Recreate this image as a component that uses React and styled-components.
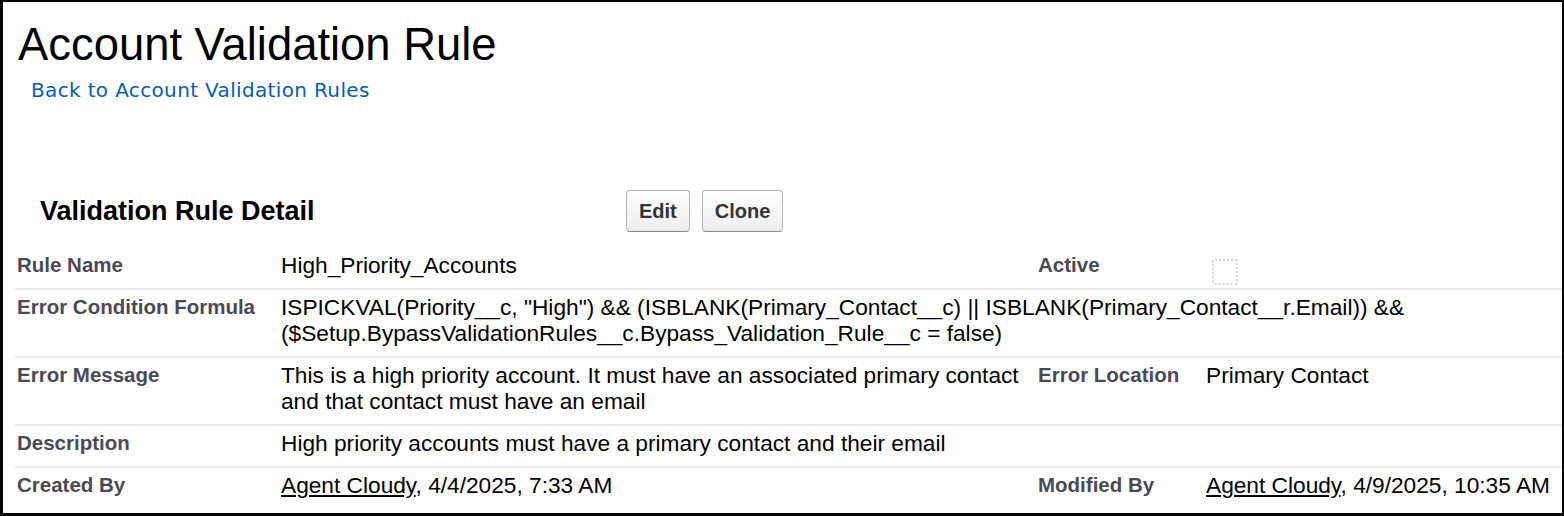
import React from 'react';
import styled, { createGlobalStyle } from 'styled-components';

const GlobalStyle = createGlobalStyle`
  html, body {
    margin: 0;
    padding: 0;
    background: #fff;
  }
  body {
    font-family: 'Liberation Sans', Arial, Helvetica, sans-serif;
    color: #000;
  }
`;

const rows = [
  {
    label: 'Rule Name',
    value: 'High_Priority_Accounts',
    label2: 'Active',
    value2: 'checkbox',
  },
  {
    label: 'Error Condition Formula',
    value:
      'ISPICKVAL(Priority__c, "High") && (ISBLANK(Primary_Contact__c) || ISBLANK(Primary_Contact__r.Email)) && ($Setup.BypassValidationRules__c.Bypass_Validation_Rule__c = false)',
    wide: true,
  },
  {
    label: 'Error Message',
    value: 'This is a high priority account. It must have an associated primary contact and that contact must have an email',
    label2: 'Error Location',
    value2: 'Primary Contact',
  },
  {
    label: 'Description',
    value: 'High priority accounts must have a primary contact and their email',
    label2: '',
    value2: '',
  },
  {
    label: 'Created By',
    user: 'Agent Cloudy',
    value: ', 4/4/2025, 7:33 AM',
    label2: 'Modified By',
    user2: 'Agent Cloudy',
    value2: ', 4/9/2025, 10:35 AM',
  },
];

const App = () => {
  return (
    <>
      <GlobalStyle />
      <Page>
        <Title>Account Validation Rule</Title>
        <BackLink href="#">Back to Account Validation Rules</BackLink>
        <DetailHeader>
          <DetailTitle>Validation Rule Detail</DetailTitle>
          <ButtonWrap>
            <Button type="button">Edit</Button>
            <Button type="button">Clone</Button>
          </ButtonWrap>
        </DetailHeader>
        <DetailTable>
          {rows.map(row => (
            <Row key={row.label}>
              <Label>{row.label}</Label>
              <Value $wide={row.wide}>
                {row.user && <UserLink href="#">{row.user}</UserLink>}
                {row.value}
              </Value>
              {!row.wide && (
                <>
                  <Label>{row.label2}</Label>
                  <Value $second>
                    {row.value2 === 'checkbox' ? (
                      <Checkbox />
                    ) : (
                      <>
                        {row.user2 && <UserLink href="#">{row.user2}</UserLink>}
                        {row.value2}
                      </>
                    )}
                  </Value>
                </>
              )}
            </Row>
          ))}
        </DetailTable>
      </Page>
    </>
  );
};

export default App;

const Page = styled.div`
  box-sizing: border-box;
  width: 1564px;
  height: 516px;
  border-style: solid;
  border-color: #000;
  border-width: 2px 2px 3px 3px;
  padding-top: 17px;
  overflow: hidden;
`;

const Title = styled.h1`
  margin: 0 0 0 15px;
  font-size: 45.4px;
  line-height: 52px;
  font-weight: 400;
  color: #000;
`;

const BackLink = styled.a`
  display: block;
  margin: 7px 0 0 28px;
  font-family: 'DejaVu Sans', Verdana, sans-serif;
  font-size: 20px;
  letter-spacing: 0.35px;
  line-height: 24px;
  color: #0b5cab;
  text-decoration: none;
`;

const DetailHeader = styled.div`
  display: flex;
  align-items: center;
  margin-top: 88px;
  padding-left: 37px;
`;

const DetailTitle = styled.h2`
  width: 586px;
  margin: 0;
  font-size: 27px;
  line-height: 30px;
  font-weight: 700;
`;

const ButtonWrap = styled.div`
  display: flex;
  gap: 12px;
`;

const Button = styled.button`
  height: 42px;
  padding: 0 12px;
  border: 1px solid #b5b5b5;
  border-bottom-color: #8a8a8a;
  border-radius: 4px;
  background: linear-gradient(#ffffff, #ededed);
  font-family: 'Liberation Sans', Arial, sans-serif;
  font-size: 20px;
  font-weight: 700;
  color: #333;
`;

const DetailTable = styled.div`
  margin: 16px 0 0 12px;
`;

const Row = styled.div`
  display: grid;
  grid-template-columns: 266px 755px 168px 1fr;
  padding: 4px 0 10px;
  border-bottom: 2px solid #e8e8e8;
  line-height: 26px;

  &:last-child {
    border-bottom: none;
  }
`;

const Label = styled.div`
  padding-left: 2px;
  font-size: 20.5px;
  font-weight: 700;
  color: #4a4a56;
`;

const Value = styled.div`
  grid-column: ${p => (p.$wide ? '2 / 5' : 'auto')};
  padding-left: ${p => (p.$second ? '2px' : '0')};
  padding-right: 8px;
  font-size: 22.7px;
  color: #000;
`;

const UserLink = styled.a`
  color: #000;
  text-decoration: underline;
`;

const Checkbox = styled.div`
  box-sizing: border-box;
  width: 26px;
  height: 26px;
  margin: 7px 0 -7px 6px;
  border: 2px dotted #d4d4d4;
  border-radius: 3px;
`;
